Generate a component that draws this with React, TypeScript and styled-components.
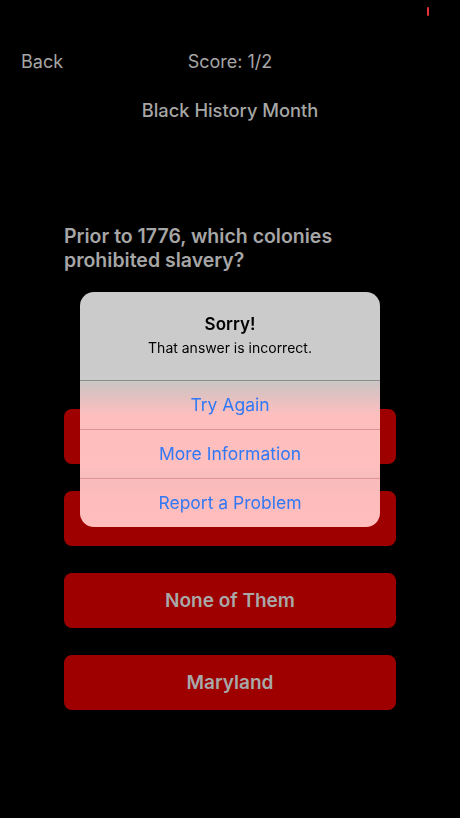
import React from 'react';
import styled, { createGlobalStyle } from 'styled-components';

const GlobalStyle = createGlobalStyle`
  html, body {
    margin: 0;
    padding: 0;
    background: #000;
  }
  * {
    box-sizing: border-box;
  }
`;

const Screen = styled.main`
  min-height: 100vh;
  background: #000;
  display: flex;
  flex-direction: column;
  font-family: Inter, 'Liberation Sans', sans-serif;
  color: #a6a6a6;
`;

const StatusBar = styled.div`
  height: 39px;
  display: flex;
  justify-content: flex-end;
  padding: 7px 31px 0 0;
`;

const RecordDot = styled.span`
  width: 2px;
  height: 9px;
  border-radius: 1px;
  background: #e8303a;
`;

const NavBar = styled.header`
  height: 44px;
  display: grid;
  grid-template-columns: 1fr auto 1fr;
  align-items: center;
  padding: 0 21px;
  font-size: 18px;
  font-weight: 400;
`;

const BackButton = styled.span`
  justify-self: start;
`;

const Score = styled.span`
  justify-self: center;
`;

const Title = styled.h1`
  margin: 16px 0 0;
  font-size: 18.3px;
  line-height: 22px;
  font-weight: 500;
  text-align: center;
`;

const Question = styled.h2`
  margin: 103px 64px 0;
  font-size: 19.5px;
  line-height: 24px;
  font-weight: 600;
`;

const Answers = styled.div`
  margin: 137px 64px 0;
  display: flex;
  flex-direction: column;
  gap: 27px;
`;

const AnswerButton = styled.button`
  height: 55px;
  border: none;
  border-radius: 8px;
  background: #9e0000;
  color: #a8a8a8;
  font-family: inherit;
  font-size: 19px;
  font-weight: 600;
`;

const Overlay = styled.div`
  position: fixed;
  inset: 0;
  display: flex;
  align-items: center;
  justify-content: center;
`;

const Alert = styled.div`
  width: 300px;
  border-radius: 14px;
  overflow: hidden;
  background: linear-gradient(
    180deg,
    #cbcbcb 0px,
    #cbcbcb 88px,
    #cec3c3 92px,
    #fdbebe 122px,
    #ffbfbf 175px,
    #f7bcbc 185px,
    #fdbbbb 200px,
    #ffbdbd 235px
  );
  display: flex;
  flex-direction: column;
`;

const AlertHeader = styled.div`
  height: 88px;
  padding: 21px 16px 0;
  text-align: center;
  color: #000;
`;

const AlertTitle = styled.div`
  font-size: 17px;
  line-height: 22px;
  font-weight: 600;
`;

const AlertMessage = styled.div`
  margin-top: 4px;
  font-size: 14px;
  line-height: 18px;
`;

const AlertAction = styled.button<{ $first?: boolean }>`
  flex: none;
  height: 49px;
  border: none;
  border-top: 1px solid ${(p) => (p.$first ? '#8d8d8d' : '#df9393')};
  background: transparent;
  color: #3178f4;
  font-family: inherit;
  font-size: 17.5px;
  font-weight: 400;
`;

const answers = ['', '', 'None of Them', 'Maryland'];

const App = () => {
  return (
    <>
      <GlobalStyle />
      <Screen>
        <StatusBar>
          <RecordDot />
        </StatusBar>
        <NavBar>
          <BackButton>Back</BackButton>
          <Score>Score: 1/2</Score>
          <span />
        </NavBar>
        <Title>Black History Month</Title>
        <Question>
          Prior to 1776, which colonies
          <br />
          prohibited slavery?
        </Question>
        <Answers>
          {answers.map((a, i) => (
            <AnswerButton key={i}>{a}</AnswerButton>
          ))}
        </Answers>
        <Overlay>
          <Alert>
            <AlertHeader>
              <AlertTitle>Sorry!</AlertTitle>
              <AlertMessage>That answer is incorrect.</AlertMessage>
            </AlertHeader>
            <AlertAction $first>Try Again</AlertAction>
            <AlertAction>More Information</AlertAction>
            <AlertAction>Report a Problem</AlertAction>
          </Alert>
        </Overlay>
      </Screen>
    </>
  );
};

export default App;
